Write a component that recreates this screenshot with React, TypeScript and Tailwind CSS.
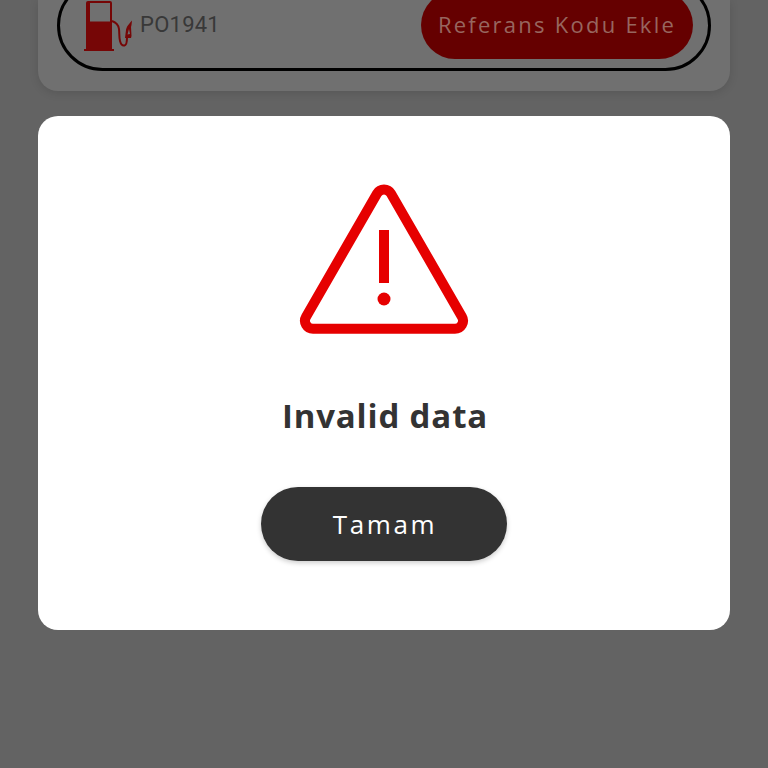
const openSans = "font-['Open_Sans',sans-serif]";

function FuelPump() {
  return (
    <svg viewBox="0 0 48 50" className="h-[50px] w-[48px] shrink-0" fill="#760606">
      <path fillRule="evenodd" d="M2 2q0-2 2-2h22q2 0 2 2v46H2zM6 2v18.500h20V2z" />
      <rect x="-1" y="48" width="31" height="2" />
      <path d="M28 20c4 1.500 6.500 4 7 8 .500 4 0 9 1 12 .700 2.500 2.500 5 4.500 4.500 2-.500 2.500-4 2.500-8" fill="none" stroke="#760606" strokeWidth="2" />
      <path fillRule="evenodd" d="M41 37l1-8c.500-3 2-5 6-9.500l-.500 4.500-.500 2 .500 9-.500 2zM45 28l-1.500 5.500 2.500-.500z" />
    </svg>
  );
}

function WarningIcon() {
  return (
    <svg viewBox="0 0 170 150" className="h-[150px] w-[170px]" fill="none">
      <path
        d="M78.070 9.500 A8 8 0 0 1 91.930 9.500 L162.930 132.700 A8 8 0 0 1 156 144.700 L14 144.700 A8 8 0 0 1 7.070 132.700 Z"
        stroke="#e60000"
        strokeWidth="10"
        strokeLinejoin="round"
      />
      <rect x="80" y="46" width="10" height="53" fill="#e60000" />
      <circle cx="85" cy="115" r="6.500" fill="#e60000" />
    </svg>
  );
}

export default function App() {
  return (
    <div className={`flex h-[768px] w-[768px] flex-col items-center overflow-hidden bg-[#636363] ${openSans}`}>
      {/* card behind the dialog, scrolled past the top */}
      <div className="h-[91px] w-[692px] shrink-0 rounded-b-[20px] bg-[#707070] px-[19px] shadow-[0_2px_10px_rgba(0,0,0,0.12)]">
        <div className="mt-[-20px] flex h-[91px] items-center justify-between rounded-[46px] border-[3px] border-black pl-[24px] pr-[15px]">
          <div className="flex items-center gap-[8px]">
            <FuelPump />
            <span className="pb-[2px] font-['Roboto',sans-serif] text-[22px] leading-none tracking-[0.25px] text-[#383838]">PO1941</span>
          </div>
          <button className="mb-[1px] flex h-[68px] w-[272px] items-center justify-center rounded-[34px] bg-[#650000] pb-[2px] text-[22px] leading-none tracking-[2.250px] text-[#97665f]">
            Referans Kodu Ekle
          </button>
        </div>
      </div>

      <div className="mt-[25px] flex h-[514px] w-[692px] shrink-0 flex-col items-center rounded-[20px] bg-white pt-[68px]">
        <WarningIcon />
        <h1 className="mt-[59px] pl-[2px] text-[33px] font-bold leading-[46px] tracking-[0.85px] text-[#333333]">Invalid data</h1>
        <button className="mt-[48px] flex h-[74px] w-[246px] items-center justify-center rounded-[37px] bg-[#333333] pl-[2px] text-[26px] leading-none tracking-[2.600px] text-white shadow-[0_2px_5px_rgba(0,0,0,0.2)]">
          Tamam
        </button>
      </div>
    </div>
  );
}
